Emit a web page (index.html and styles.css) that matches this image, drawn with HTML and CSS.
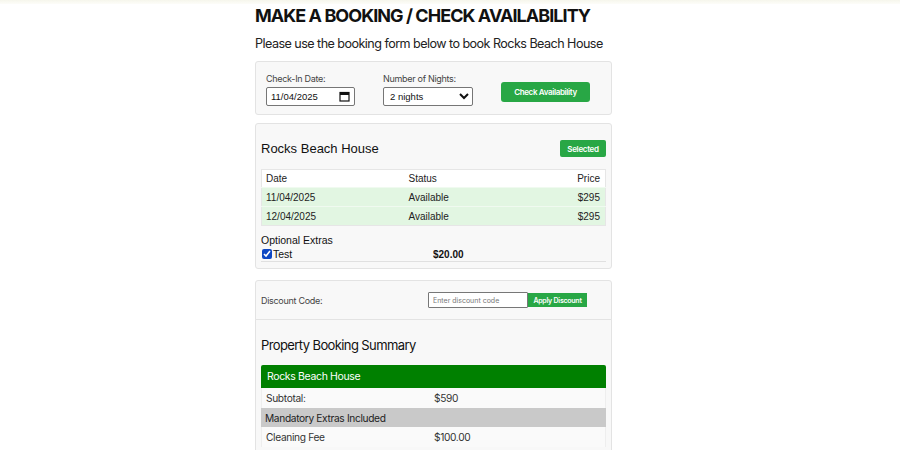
FILE: index.html
```html
<!DOCTYPE html>
<html lang="en">
<head>
<meta charset="utf-8">
<title>Make a Booking</title>
<link rel="stylesheet" href="styles.css">
</head>
<body>
<div class="topstrip"></div>
<main class="wrap">
  <h1 class="title">MAKE A BOOKING / CHECK AVAILABILITY</h1>
  <p class="subtitle">Please use the booking form below to book Rocks Beach House</p>

  <section class="card form-card">
    <div class="field">
      <label class="lbl">Check-In Date:</label>
      <div class="date-input">
        <span>11/04/2025</span>
        <svg class="cal" width="11" height="11" viewBox="0 0 11 11"><rect x="1" y="1.5" width="9" height="8.5" fill="none" stroke="#111" stroke-width="1.2"/><rect x="1" y="1.5" width="9" height="2.5" fill="#111"/></svg>
      </div>
    </div>
    <div class="field nights">
      <label class="lbl">Number of Nights:</label>
      <select class="sel"><option>2 nights</option></select>
    </div>
    <button class="btn btn-check">Check Availability</button>
  </section>

  <section class="card prop-card">
    <div class="prop-head">
      <h2 class="prop-name">Rocks Beach House</h2>
      <button class="btn btn-sel">Selected</button>
    </div>
    <table class="avail">
      <tr class="hrow"><td>Date</td><td>Status</td><td class="r">Price</td></tr>
      <tr class="ok"><td>11/04/2025</td><td>Available</td><td class="r">$295</td></tr>
      <tr class="ok"><td>12/04/2025</td><td>Available</td><td class="r">$295</td></tr>
    </table>
    <div class="extras-title">Optional Extras</div>
    <div class="extra-row">
      <label class="chk"><input type="checkbox" checked>Test</label>
      <span class="extra-price">$20.00</span>
    </div>
  </section>

  <section class="card disc-card">
    <span class="disc-lbl">Discount Code:</span>
    <div class="disc-group">
      <input class="disc-input" type="text" placeholder="Enter discount code">
      <button class="btn btn-disc">Apply Discount</button>
    </div>
  </section>

  <section class="card sum-card">
    <h2 class="sum-title">Property Booking Summary</h2>
    <div class="sum-table">
      <div class="sum-head">Rocks Beach House</div>
      <div class="sum-row"><span class="k">Subtotal:</span><span class="v">$590</span></div>
      <div class="sum-grey">Mandatory Extras Included</div>
      <div class="sum-row"><span class="k">Cleaning Fee</span><span class="v">$100.00</span></div>
    </div>
  </section>
</main>
</body>
</html>
```

FILE: styles.css
```css
* { box-sizing: border-box; }
html, body { margin: 0; padding: 0; background: #fff; }
body { font-family: Inter, "Noto Sans", sans-serif; color: #111; height: 450px; overflow: hidden; }

.topstrip { height: 4px; background: linear-gradient(#f6f6ec, #fdfdf9); }

.wrap { width: 357px; margin-left: 255px; }

.title { margin: 1px 0 0; font-size: 18px; font-weight: 700; letter-spacing: -0.95px; line-height: 22px; color: #111; white-space: nowrap; }
.subtitle { margin: 8px 0 0; font-size: 12.6px; letter-spacing: -0.55px; line-height: 17px; color: #222; font-weight: 400; white-space: nowrap; }

.card { background: #f8f8f8; border: 1px solid #e3e3e3; border-radius: 3px; }

.form-card { margin-top: 9px; height: 54px; display: flex; align-items: flex-start; padding: 11px 0 0 10px; }
.field { display: flex; flex-direction: column; }
.lbl { font-size: 9px; color: #444; line-height: 12px; margin-bottom: 2px; letter-spacing: -0.3px; }
.date-input { width: 89px; height: 19px; background: #fff; border: 1px solid #767676; border-radius: 2px; display: flex; align-items: center; justify-content: space-between; padding: 0 4px; font-family: "Liberation Sans", Arial, sans-serif; font-size: 9.5px; color: #111; }
.nights { margin-left: 28px; }
.sel { width: 90px; height: 19px; font-family: "Liberation Sans", Arial, sans-serif; font-size: 9.5px; border: 1px solid #767676; border-radius: 2px; background: #fff; padding: 0 2px; color: #111; }
.btn { border: none; background: #28a745; color: #fff; font-family: Inter, sans-serif; cursor: pointer; white-space: nowrap; padding: 0; }
.btn-check { margin-left: 28px; margin-top: 9px; width: 89px; height: 20px; border-radius: 3px; font-size: 8px; font-weight: 600; letter-spacing: -0.35px; }

.prop-card { margin-top: 8px; height: 146px; padding: 0 5px; font-family: "Liberation Sans", Arial, sans-serif; }
.prop-head { display: flex; justify-content: space-between; align-items: center; height: 45px; padding-top: 4px; }
.prop-name { margin: 0; font-size: 13px; font-weight: 400; color: #111; }
.btn-sel { width: 46px; height: 17px; border-radius: 2px; font-size: 8px; font-weight: 600; letter-spacing: -0.3px; }
.avail { width: 100%; border-collapse: collapse; border: 1px solid #e6e6e6; font-size: 10px; color: #222; }
.avail td { height: 19px; padding: 0 5px 0 4px; vertical-align: middle; }
.avail td:first-child { width: 143px; }
.avail .hrow td { background: #fff; height: 18px; }
.avail .ok td { background: #e2f6e2; border-top: 1px solid #f0faf0; }
.avail .r { text-align: right; }
.extras-title { margin-top: 8px; font-size: 10.5px; color: #111; line-height: 13px; }
.extra-row { display: flex; align-items: center; height: 15px; border-bottom: 1px solid #e0e0e0; font-size: 10.5px; }
.chk { display: flex; align-items: center; width: 172px; }
.chk input { width: 10px; height: 10px; margin: 0 1px; accent-color: #0d47c4; }
.extra-price { font-weight: 600; font-size: 10px; }

.disc-card { margin-top: 11px; height: 40px; display: flex; align-items: center; padding-left: 5px; border-bottom-left-radius: 0; border-bottom-right-radius: 0; }
.disc-lbl { font-size: 9px; color: #444; width: 167px; letter-spacing: -0.3px; }
.disc-group { display: flex; align-items: center; }
.disc-input { width: 100px; height: 16px; border: 1px solid #777; border-radius: 1px; font-size: 7px; padding: 0 4px; font-family: Inter, sans-serif; }
.disc-input::placeholder { color: #777; }
.btn-disc { width: 59px; height: 14px; font-size: 7px; font-weight: 600; letter-spacing: -0.25px; }

.sum-card { margin-top: -1px; height: 140px; padding: 0 5px; border-top-left-radius: 0; border-top-right-radius: 0; }
.sum-title { margin: 0; padding-top: 17px; height: 45px; font-size: 13px; font-weight: 400; color: #111; letter-spacing: -0.6px; }
.sum-table { font-size: 10.2px; }
.sum-head { background: #008000; color: #fff; height: 23px; display: flex; align-items: center; padding-left: 6px; font-size: 10.5px; border-radius: 2px 2px 0 0; letter-spacing: -0.35px; }
.sum-row { background: #fafafa; height: 20px; display: flex; align-items: center; padding-left: 4px; color: #333; border-left: 1px solid #eee; border-right: 1px solid #eee; letter-spacing: -0.35px; }
.sum-row .k { width: 168px; }
.sum-grey { background: #c9c9c9; height: 19px; display: flex; align-items: center; padding-left: 4px; color: #222; letter-spacing: -0.35px; }
```
